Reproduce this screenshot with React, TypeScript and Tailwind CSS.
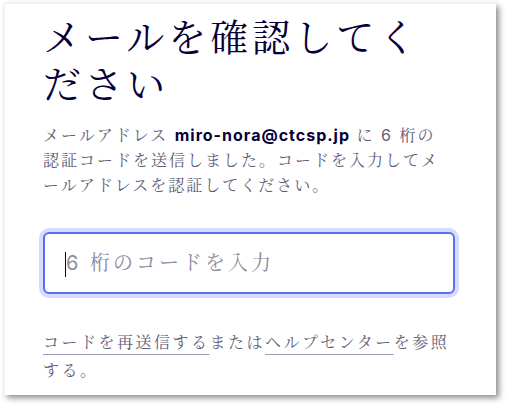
const FONT = "font-['Inter','Noto_Serif_CJK_JP','Noto_Sans_CJK_JP',sans-serif]";

export default function App() {
  return (
    <div className={`w-[510px] h-[408px] bg-white pt-[3px] pl-[4px] ${FONT}`}>
      <div className="w-[492px] h-[392px] bg-white border-t border-l border-[#f0f0f0] shadow-[3px_3px_6px_rgba(0,0,0,0.45)] pt-[10px] pl-[38px]">
        <div className="w-[412px]">
          <h1 className="text-[38px] leading-[47px] tracking-[4px] text-[#050038] font-normal">
            メールを確認してください
          </h1>

          <p className="mt-[15px] text-[16px] leading-[25px] tracking-[2px] text-[#5f5d78]">
            メールアドレス{" "}
            <span className="font-bold text-[#050038] tracking-[1px]">miro-nora@ctcsp.jp</span>{" "}
            に 6 桁の
            <br />
            認証コードを送信しました。コードを入力してメールアドレスを認証してください。
          </p>

          <div className="relative mt-[34px]">
            <input
              type="text"
              placeholder="6 桁のコードを入力"
              className="block w-[412px] h-[62px] rounded-[6px] border-2 border-[#5b6cf5] bg-white pl-[21px] text-[20px] tracking-[3px] text-[#050038] placeholder-[#8d8b9e] outline-none shadow-[0_0_0_4px_#d6dcff]"
            />
            <span className="absolute left-[22px] top-[20px] h-[25px] w-px bg-[#050038]" />
          </div>

          <p className="mt-[34px] text-[16px] leading-[28px] tracking-[2.5px] text-[#5f5d78]">
            <a href="#" className="underline decoration-[#9d9bb8] underline-offset-[6px] decoration-1">
              コードを再送信する
            </a>
            または
            <a href="#" className="underline decoration-[#9d9bb8] underline-offset-[6px] decoration-1">
              ヘルプセンター
            </a>
            を参照する。
          </p>
        </div>
      </div>
    </div>
  );
}
